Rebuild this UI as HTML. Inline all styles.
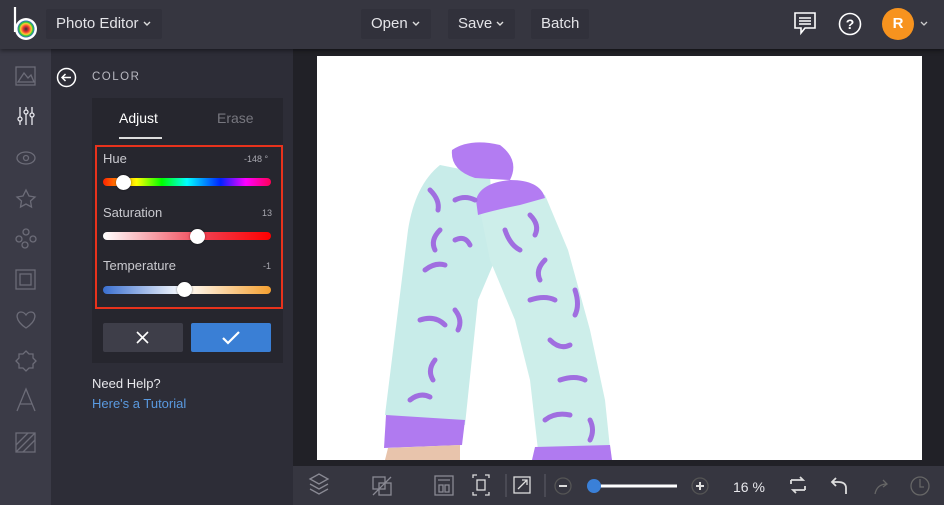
<!DOCTYPE html>
<html><head><style>
*{margin:0;padding:0;box-sizing:border-box}
body{width:944px;height:505px;overflow:hidden;background:#212127;font-family:"Liberation Sans",sans-serif;position:relative}
.a{position:absolute}
.top{left:0;top:0;width:944px;height:49px;background:#363640;box-shadow:0 2px 4px rgba(0,0,0,.4);z-index:2}
.btn{position:absolute;top:9px;height:30px;background:#31313b;color:#e4e4e8;font-size:15px;line-height:30px;padding:0 10px;border-radius:2px}
.btn svg{vertical-align:middle;margin-left:3px}
.rail{left:0;top:49px;width:51px;height:456px;background:#3b3b47}
.panel{left:51px;top:49px;width:242px;height:456px;background:#2d2d37}
.box{left:92px;top:98px;width:191px;height:265px;background:#26262e}
.lbl{color:#c9c9cf;font-size:13px}
.val{color:#a8a8b0;font-size:9px}
.track{height:8px;border-radius:4px;left:103px;width:168px}
.knob{width:15px;height:15px;border-radius:50%;background:#fff;box-shadow:0 0 2px rgba(0,0,0,.5)}
.bot{left:293px;top:466px;width:651px;height:39px;background:#363640}
svg.i{position:absolute}
</style></head><body>
<div class="a top">
  <svg class="i" style="left:11px;top:5px" width="30" height="36" viewBox="0 0 30 36"><line x1="4" y1="2" x2="4" y2="27" stroke="#fff" stroke-width="2.2"/><circle cx="15" cy="24" r="11" fill="#fff"/><circle cx="15" cy="24" r="8.5" fill="url(#g)"/><defs><radialGradient id="g"><stop offset="0" stop-color="#333"/><stop offset=".35" stop-color="#e33"/><stop offset=".65" stop-color="#fc3"/><stop offset=".8" stop-color="#3c3"/><stop offset="1" stop-color="#36c"/></radialGradient></defs></svg>
  <div class="btn" style="left:46px">Photo Editor<svg width="10" height="8" viewBox="0 0 10 8"><path d="M2 2l3 3 3-3" fill="none" stroke="#ddd" stroke-width="1.4"/></svg></div>
  <div class="btn" style="left:361px">Open<svg width="10" height="8" viewBox="0 0 10 8"><path d="M2 2l3 3 3-3" fill="none" stroke="#ddd" stroke-width="1.4"/></svg></div>
  <div class="btn" style="left:448px">Save<svg width="10" height="8" viewBox="0 0 10 8"><path d="M2 2l3 3 3-3" fill="none" stroke="#ddd" stroke-width="1.4"/></svg></div>
  <div class="btn" style="left:531px">Batch</div>
  <svg class="i" style="left:793px;top:11px" width="24" height="26" viewBox="0 0 24 26" fill="none" stroke="#fff" stroke-width="1.6"><path d="M2 2h20v15H12l-4 5v-5H2z"/><path d="M6 7h12M6 10h12M6 13h12"/></svg>
  <svg class="i" style="left:838px;top:12px" width="24" height="24" viewBox="0 0 24 24"><circle cx="12" cy="12" r="10.5" fill="none" stroke="#fff" stroke-width="1.6"/><text x="12" y="17" text-anchor="middle" fill="#fff" font-size="14" font-weight="bold" font-family="Liberation Sans">?</text></svg>
  <div class="a" style="left:882px;top:8px;width:32px;height:32px;border-radius:50%;background:#f7931e;color:#fff;font-weight:bold;font-size:15px;text-align:center;line-height:32px">R</div>
  <svg class="i" style="left:919px;top:20px" width="10" height="8" viewBox="0 0 10 8"><path d="M2 2l3 3 3-3" fill="none" stroke="#ccc" stroke-width="1.3"/></svg>
</div>
<div class="a rail"></div>
<svg class="i" style="left:0;top:49px" width="51" height="420" viewBox="0 0 51 420" fill="none" stroke="#6c6c78" stroke-width="1.3">
  <rect x="16" y="18" width="19" height="18"/><path d="M18 33l6-9 4 5 3-3 3 7z"/>
  <g stroke="#e8e8ee"><path d="M20 58v18M26 58v18M32 58v18"/><circle cx="20" cy="70" r="2" fill="#3b3b47"/><circle cx="26" cy="63" r="2" fill="#3b3b47"/><circle cx="32" cy="66" r="2" fill="#3b3b47"/></g>
  <ellipse cx="26" cy="109" rx="9" ry="6"/><circle cx="26" cy="109" r="2.5"/>
  <path d="M26 141l3 6 6 1-4.5 4 1 6-5.5-3-5.5 3 1-6-4.5-4 6-1z"/>
  <circle cx="26" cy="183" r="3"/><circle cx="19" cy="190" r="3"/><circle cx="33" cy="190" r="3"/><circle cx="25" cy="196" r="3"/>
  <rect x="16" y="221" width="19" height="19"/><rect x="20" y="225" width="11" height="11"/>
  <path d="M26 279c-12-8-10-16-5-16 3 0 5 3 5 3s2-3 5-3c5 0 7 8-5 16z"/>
  <path d="M26 302l3 3h4v4l3 3-3 3v4h-4l-3 3-3-3h-4v-4l-3-3 3-3v-4h4z"/>
  <path d="M17 362l9-22 9 22M20 355h12"/>
  <rect x="16" y="384" width="19" height="19"/><path d="M16 396l12-12M16 403l19-19M23 403l12-12"/>
</svg>
<div class="a panel"></div>
<svg class="i" style="left:56px;top:67px" width="21" height="21" viewBox="0 0 21 21" fill="none" stroke="#fff" stroke-width="1.5"><circle cx="10.5" cy="10.5" r="9"/><path d="M15 10.5H6M9.5 7l-3.5 3.5 3.5 3.5"/></svg>
<div class="a" style="left:92px;top:71px;color:#b8b8c0;font-size:11.5px;letter-spacing:1.5px">COLOR</div>
<div class="a box"></div>
<div class="a" style="left:119px;top:110px;color:#fff;font-size:14px">Adjust</div>
<div class="a" style="left:119px;top:137px;width:43px;height:2px;background:#ddd"></div>
<div class="a" style="left:217px;top:110px;color:#77777f;font-size:14px">Erase</div>
<div class="a" style="left:95px;top:145px;width:188px;height:164px;border:2px solid #e8321c"></div>
<div class="a lbl" style="left:103px;top:151px">Hue</div><div class="a val" style="left:244px;top:154px">-148 °</div>
<div class="a track" style="top:178px;background:linear-gradient(90deg,#f20,#ff0 20%,#0f0 35%,#0ff 50%,#02f 70%,#f0f 85%,#f05)"></div>
<div class="a knob" style="left:116px;top:175px"></div>
<div class="a lbl" style="left:103px;top:205px">Saturation</div><div class="a val" style="left:262px;top:208px">13</div>
<div class="a track" style="top:232px;background:linear-gradient(90deg,#fff,#f04050 60%,#f00)"></div>
<div class="a knob" style="left:190px;top:229px"></div>
<div class="a lbl" style="left:103px;top:258px">Temperature</div><div class="a val" style="left:263px;top:261px">-1</div>
<div class="a track" style="top:286px;background:linear-gradient(90deg,#3a6fd0,#fff 48%,#f5a030)"></div>
<div class="a knob" style="left:177px;top:282px"></div>
<div class="a" style="left:103px;top:323px;width:80px;height:29px;background:#3e3e49;border-radius:2px"></div>
<svg class="i" style="left:135px;top:330px" width="15" height="15" viewBox="0 0 15 15" stroke="#fff" stroke-width="1.6"><path d="M2 2l11 11M13 2L2 13"/></svg>
<div class="a" style="left:191px;top:323px;width:80px;height:29px;background:#3a7fd5;border-radius:2px"></div>
<svg class="i" style="left:221px;top:330px" width="20" height="15" viewBox="0 0 20 15" fill="none" stroke="#fff" stroke-width="2.2"><path d="M2 8l5 5L18 2"/></svg>
<div class="a" style="left:92px;top:376px;color:#e8e8ec;font-size:13px">Need Help?</div>
<div class="a" style="left:92px;top:396px;color:#5a9ae0;font-size:13px">Here's a Tutorial</div>
<div class="a" style="left:317px;top:56px;width:605px;height:404px;background:#fff;overflow:hidden">
<svg width="605" height="404" viewBox="317 56 605 404">
  <path d="M385 415 L408 230 Q415 185 440 165 L490 175 L495 260 L478 300 L465 425 Z" fill="#c8ece9"/>
  <path d="M384 448 L386 415 L465 420 L462 445 Z" fill="#b07af0"/>
  <path d="M388 448 L460 445 L460 460 L385 460 Z" fill="#e8c4ac"/>
  <path d="M452 150 Q470 138 500 145 Q520 160 510 180 L475 178 Q450 170 452 150Z" fill="#b37cf2"/>
  <path d="M478 200 L510 185 L545 195 L568 250 L590 330 L605 400 L610 448 L538 450 L530 380 L515 320 L490 260Z" fill="#cdeeea"/>
  <path d="M476 200 Q480 183 510 180 Q540 180 545 198 L520 205 Q495 210 478 215Z" fill="#b37cf2"/>
  <path d="M535 447 L610 445 L612 460 L532 460Z" fill="#b07af0"/>
  <g fill="none" stroke="#a06ee0" stroke-width="5" stroke-linecap="round">
    <path d="M430 190q10 10 8 20"/><path d="M455 200q10-5 20 0"/><path d="M440 230q-10 10-5 20"/><path d="M425 270q10-8 20-5"/>
    <path d="M455 240q10-5 15 5"/><path d="M420 320q15-5 25 5"/><path d="M435 360q-8 10-2 20"/><path d="M410 400q10-8 20-3"/>
    <path d="M505 230q5 15 15 20"/><path d="M530 215q10 10 5 20"/><path d="M545 260q-10 10-5 20"/><path d="M530 300q15-5 25 0"/>
    <path d="M575 290q5 15 0 25"/><path d="M550 340q10 10 20 5"/><path d="M560 380q15-5 25 0"/><path d="M545 420q10-8 25-5"/><path d="M590 420q5 10 0 20"/>
    <path d="M455 310q8 10 3 20"/>
  </g>
</svg></div>
<div class="a bot"></div>
<svg class="i" style="left:293px;top:466px" width="651" height="39" viewBox="0 0 651 39" fill="none" stroke="#8a8a94" stroke-width="1.3">
  <path d="M17 13l9-5 9 5-9 5zM17 18l9 5 9-5M17 23l9 5 9-5"/>
  <rect x="80" y="11" width="12" height="12"/><rect x="86" y="17" width="12" height="12"/><path d="M80 29l18-18"/>
  <rect x="142" y="10" width="18" height="19"/><path d="M145 14h12M146 19h4v7h-4zM152 19h4v7h-4z"/>
  <g stroke="#ddd"><path d="M180 12v-3h4M192 9h4v3M196 26v3h-4M184 29h-4v-3"/><rect x="184" y="14" width="8" height="10"/></g>
  <path d="M213 8v23" stroke="#55555f"/>
  <g stroke="#ddd"><rect x="221" y="11" width="16" height="16"/><path d="M225 23l9-9M229 14h5v5"/></g>
  <path d="M252 8v23" stroke="#55555f"/>
  <circle cx="270" cy="20" r="8" stroke="#555"/><path d="M266 20h8" stroke="#ddd" stroke-width="2"/>
  <path d="M301 20h83" stroke="#fff" stroke-width="3"/>
  <circle cx="407" cy="20" r="8" stroke="#555"/><path d="M403 20h8M407 16v8" stroke="#ddd" stroke-width="2"/>
  <g stroke="#ddd" stroke-width="1.8"><path d="M498 14h12l-3-3M512 24h-12l3 3M498 14v4M512 24v-4"/><path d="M553 28v-6q0-6-8-6h-6M543 12l-4 4 4 4"/></g>
  <path d="M582 28q2-10 12-10M590 14l4 4-4 3" stroke="#666"/>
  <circle cx="627" cy="20" r="9" stroke="#666"/><path d="M627 13v8h4" stroke="#666"/>
</svg>
<div class="a" style="left:587px;top:479px;width:14px;height:14px;border-radius:50%;background:#3a80d8"></div>
<div class="a" style="left:733px;top:479px;color:#e8e8ec;font-size:14px">16 %</div>
</body></html>
